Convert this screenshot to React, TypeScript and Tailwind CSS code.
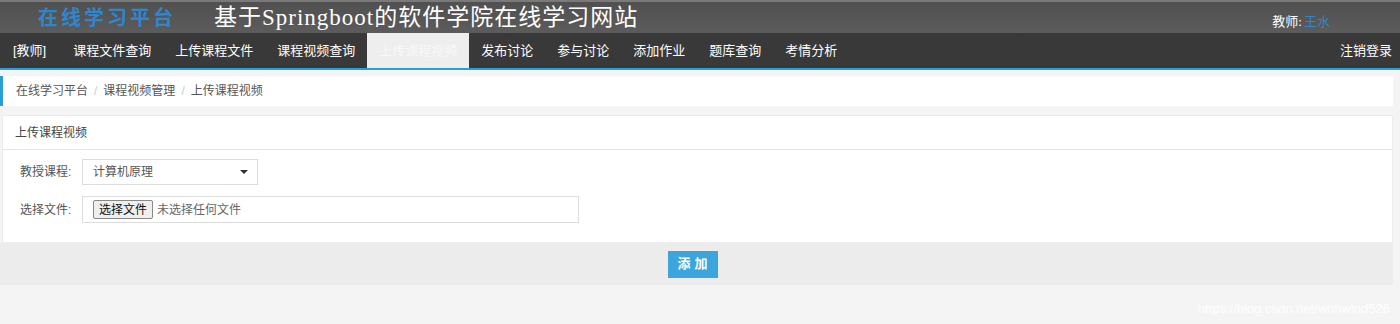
import React, { useState } from 'react';

const navItems = ['课程文件查询', '上传课程文件', '课程视频查询', '上传课程视频', '发布讨论', '参与讨论', '添加作业', '题库查询', '考情分析'];

export default function App() {
  const [active] = useState('上传课程视频');
  const [course, setCourse] = useState('计算机原理');

  return (
    <div className="w-[1400px] h-[324px] bg-[#f4f4f4] overflow-hidden relative" style={{ fontFamily: '"Liberation Sans", "Noto Sans CJK SC", sans-serif' }}>
      {/* header */}
      <div className="h-[33px] bg-gradient-to-b from-[#505050] to-[#5c5c5c] border-t-2 border-[#7a7a7a] flex items-center pl-[38px] pr-[70px]">
        <span className="text-[#2f86cc] text-[20px] font-bold tracking-[3px] leading-none" style={{ fontFamily: '"Liberation Serif", "Noto Sans CJK SC", serif' }}>在线学习平台</span>
        <span className="ml-[38px] text-white text-[23px] tracking-[1px] leading-none" style={{ fontFamily: '"Liberation Serif", "Noto Sans CJK SC", serif' }}>基于Springboot的软件学院在线学习网站</span>
        <span className="ml-auto mt-[8px] text-[13px] text-white leading-none" style={{ fontFamily: '"Liberation Serif", "Noto Sans CJK SC", serif' }}>
          教师:<span className="text-[#2f86cc] ml-[2px]">王水</span>
        </span>
      </div>

      {/* nav */}
      <div className="h-[37px] bg-[#393939] border-b-2 border-[#2a9fd6] flex items-stretch text-[13px] text-white">
        <a className="flex items-center pl-[13px] pr-[15px]">[教师]</a>
        {navItems.map(item => (
          <a
            key={item}
            className={
              item === active
                ? 'flex items-center px-[12px] bg-[#eeeeee] text-[#f8f8f8]'
                : 'flex items-center px-[12px]'
            }
          >
            {item}
          </a>
        ))}
        <a className="ml-auto flex items-center pr-[8px]">注销登录</a>
      </div>

      <div className="w-[1393px]">
        {/* breadcrumb */}
        <div className="mt-[6px] h-[30px] bg-white border-l-[3px] border-[#2a9fd6] flex items-center pl-[13px] text-[12px] text-[#555]">
          <span>在线学习平台</span>
          <span className="mx-[6px] text-[#ccc]">/</span>
          <span>课程视频管理</span>
          <span className="mx-[6px] text-[#ccc]">/</span>
          <span>上传课程视频</span>
        </div>

        {/* panel */}
        <div className="mt-[9px] ml-[2px] bg-white border border-[#ececec]">
          <div className="h-[34px] flex items-center pl-[12px] text-[12px] text-[#444] border-b border-[#e4e4e4]">上传课程视频</div>
          <div className="pt-[9px] pb-[19px] pl-[17px] text-[12px] text-[#555] flex flex-col gap-[11px]">
            <div className="flex items-center">
              <span className="w-[62px]">教授课程:</span>
              <div className="w-[176px] h-[26px] border border-[#ddd] flex items-center pl-[10px] pr-[9px] text-[#555]">
                <span>{course}</span>
                <span className="ml-auto w-0 h-0 border-l-[4px] border-r-[4px] border-t-[4px] border-l-transparent border-r-transparent border-t-[#333]" onClick={() => setCourse(course)} />
              </div>
            </div>
            <div className="flex items-center">
              <span className="w-[62px]">选择文件:</span>
              <div className="w-[497px] h-[27px] border border-[#ddd] flex items-center pl-[10px] text-[#666]">
                <span className="h-[19px] px-[5px] flex items-center border border-[#888] rounded-[2px] bg-[#efefef] text-[#111]">选择文件</span>
                <span className="ml-[4px]">未选择任何文件</span>
              </div>
            </div>
          </div>
        </div>

        {/* footer */}
        <div className="h-[42px] bg-[#ececec] flex items-center justify-center">
          <button className="mr-[8px] w-[50px] h-[27px] bg-[#3ca5dc] text-white text-[13px] font-bold tracking-[4px] pl-[4px]">添加</button>
        </div>
      </div>

      <div className="absolute right-[10px] bottom-[6px] text-[13px] text-white/80">https://blog.csdn.net/wnnwind526</div>
    </div>
  );
}
